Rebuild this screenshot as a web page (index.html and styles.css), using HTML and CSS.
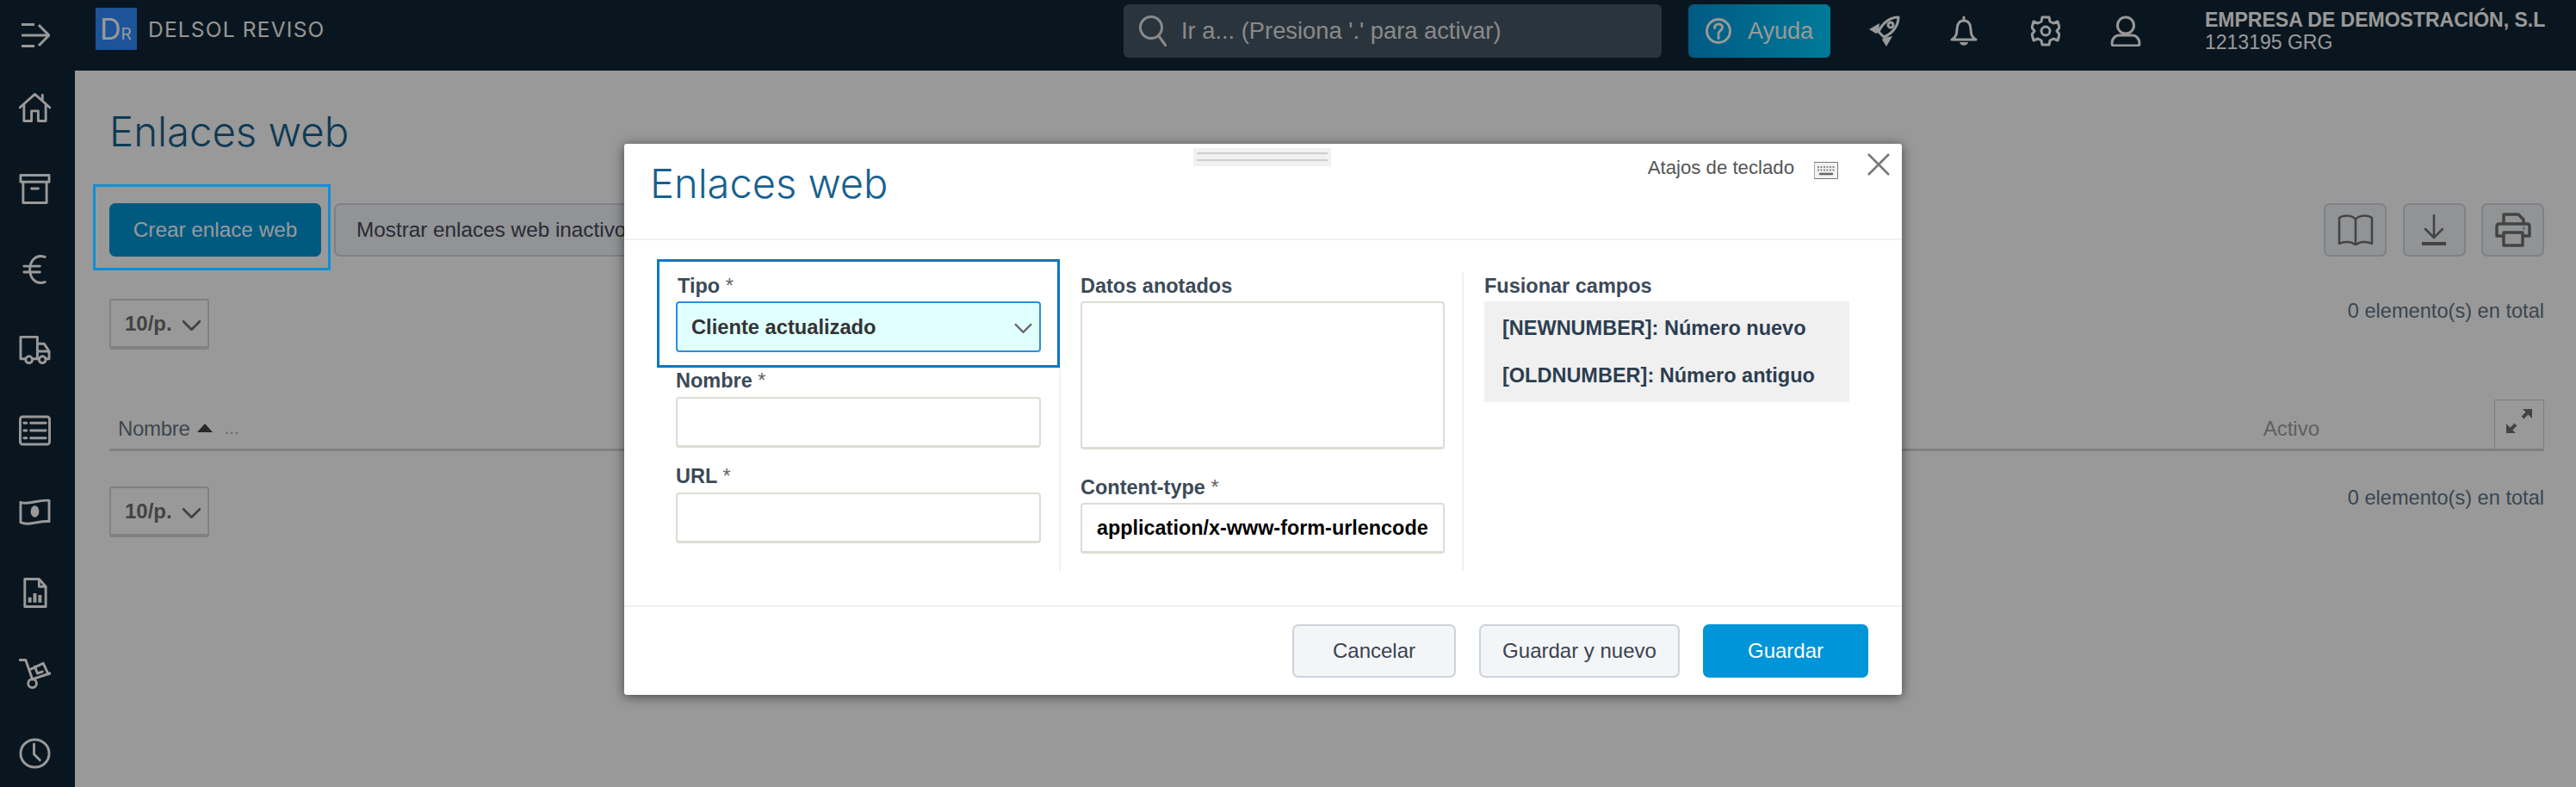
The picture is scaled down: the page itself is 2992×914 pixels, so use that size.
FILE: index.html
```html
<!DOCTYPE html>
<html lang="es">
<head>
<meta charset="utf-8">
<title>Enlaces web</title>
<link rel="stylesheet" href="styles.css">
</head>
<body>
<div class="app">
  <header class="topbar">
    <div class="toggle">
      <svg class="ic-toggle" viewBox="0 0 33 28"><path d="M0 1.500h15M0 14h31M0 26.500h15M20 2l12 12-12 12"/></svg>
    </div>
    <div class="logo"><span class="logo-d">D</span><span class="logo-r">R</span></div>
    <div class="brand">DELSOL REVISO</div>
    <div class="search">
      <svg class="ic-search" viewBox="0 0 32 36"><circle cx="14" cy="14" r="12.500"/><path d="M23 24l8 11"/></svg>
      <span>Ir a... (Presiona '.' para activar)</span>
    </div>
    <div class="help">
      <svg class="ic-help" viewBox="0 0 30 30"><circle cx="15" cy="15" r="13.500"/><path d="M10.500 11.500c0-6 9-6 9-.5 0 3.500-4.500 3.500-4.500 7.500"/><path d="M15 21v2.500"/></svg>
      <span>Ayuda</span>
    </div>
    <svg class="top-ic ic-rocket" viewBox="0 0 36 36"><path d="M34 2C24 2 15 9 11 19l6 6C27 21 34 12 34 2z"/><circle cx="25" cy="11" r="3"/><path class="solid" d="M12 9L0 16l8 5 3-2zM27 24L20 36l-5-8 2-2z"/></svg>
    <svg class="top-ic ic-bell" viewBox="0 0 32 36"><path d="M2 28c4-2 6-5 6-12 0-6 3-10 8-10s8 4 8 10c0 7 2 10 6 12zM16 6V2"/><path class="solid" d="M11 31h10c-1 5-9 5-10 0z"/></svg>
    <svg class="top-ic ic-gear" viewBox="0 0 34 36"><path d="M13 2h8l1 5 4 2 5-2 2 7-3 4 3 4-2 7-5-2-4 2-1 5h-8l-1-5-4-2-5 2-2-7 3-4-3-4 2-7 5 2 4-2z"/><circle cx="17" cy="18" r="5"/></svg>
    <svg class="top-ic ic-user" viewBox="0 0 36 36"><circle cx="18" cy="11.500" r="9.500"/><path d="M2 32c0-5 4-9 8-9h16c4 0 8 4 8 9 0 2-1 3-2 3H4c-1 0-2-1-2-3z"/></svg>
    <div class="company">
      <strong>EMPRESA DE DEMOSTRACIÓN, S.L</strong>
      <span>1213195 GRG</span>
    </div>
  </header>
  <div class="below">
    <nav class="sidebar">
      <svg class="nav-ic" viewBox="0 0 38 36"><path d="M1 18L19 2l18 16M6 14v20h9V22h8v12h9V14M28 9V3"/></svg>
      <svg class="nav-ic" viewBox="0 0 38 36"><path d="M2 2h34v8H2zM5 10v25h28V10zM15 18h8"/></svg>
      <svg class="nav-ic" viewBox="0 0 38 36"><path d="M31 3C19 -1 13 9 13 18s6 19 18 15M6 14h19M6 21h19"/></svg>
      <svg class="nav-ic" viewBox="0 0 38 36"><path d="M8 29H2V3h20v26h-6M22 11h8l6 9v9h-4M24 29h-2M22 20h14"/><circle cx="12" cy="30" r="4"/><circle cx="28" cy="30" r="4"/></svg>
      <svg class="nav-ic" viewBox="0 0 38 36"><rect x="1.500" y="1.500" width="35" height="33" rx="3"/><path d="M14 9h18M14 18h18M14 27h18M6 9h3M6 18h3M6 27h3"/></svg>
      <svg class="nav-ic" viewBox="0 0 38 36"><path d="M2 7c10 4 22-4 34-2v25C26 28 12 36 2 31z"/><ellipse class="solid" cx="19" cy="18" rx="5" ry="7"/></svg>
      <svg class="nav-ic" viewBox="0 0 38 36"><path d="M7 2h17l8 9v24H7zM24 2v9h8"/><path class="thick" d="M13 30v-6M19 30V19M25 30v-9"/></svg>
      <svg class="nav-ic" viewBox="0 0 38 36"><path d="M1 2h7l8 23 21-7M12 14l17-8 6 13"/><path d="M19 10l3 8 6-2"/><circle cx="16" cy="30" r="5"/></svg>
      <svg class="nav-ic" viewBox="0 0 38 36"><ellipse cx="19" cy="18" rx="17" ry="16.500"/><path d="M18 7v12l7 7"/></svg>
    </nav>
    <main class="main">
      <h1 class="page-title">Enlaces web</h1>
      <div class="toolbar">
        <button class="btn btn-primary btn-create">Crear enlace web</button>
        <button class="btn btn-ghost btn-inactive">Mostrar enlaces web inactivos</button>
        <div class="tool-group">
          <button class="btn-icon"><svg viewBox="0 0 44 36"><path d="M22 6C19 1 8 0 3 4v30c6-3 15-3 19 2 4-5 13-5 19-2V4c-5-4-16-3-19 2zM22 6v30"/></svg></button>
          <button class="btn-icon"><svg viewBox="0 0 44 36"><path d="M22 1v25M12 17l10 10 10-10"/><path class="thick" d="M8 34h28"/></svg></button>
          <button class="btn-icon btn-print"><svg viewBox="0 0 44 40"><path d="M11 13V2h17l6 6v5M11 27H3V16c0-2 1-3 3-3h32c2 0 3 1 3 3v11h-8M11 23h22v15H11z"/><path class="thick" d="M34 18h1"/></svg></button>
        </div>
      </div>
      <div class="pager-row">
        <div class="page-size"><span>10/p.</span><svg class="chev" viewBox="0 0 22 12"><path d="M1 1l10 10L21 1"/></svg></div>
        <div class="total">0 elemento(s) en total</div>
      </div>
      <div class="table-head">
        <span class="th-name">Nombre</span>
        <span class="sort"></span>
        <span class="dots">...</span>
        <span class="th-active">Activo</span>
        <div class="expand"><svg viewBox="0 0 30 28"><path d="M19 10l6-6M11 18l-6 6"/><path class="solid" d="M19 0h11v11zM0 17v11h11z"/></svg></div>
      </div>
      <div class="pager-row pager-bottom">
        <div class="page-size"><span>10/p.</span><svg class="chev" viewBox="0 0 22 12"><path d="M1 1l10 10L21 1"/></svg></div>
        <div class="total">0 elemento(s) en total</div>
      </div>
    </main>
  </div>

  <div class="backdrop"></div>
  <div class="hl hl-create"></div>

  <section class="modal">
    <div class="drag"><i></i><i></i></div>
    <div class="modal-head">
      <h2 class="modal-title">Enlaces web</h2>
      <div class="shortcuts">Atajos de teclado</div>
      <svg class="ic-kbd" viewBox="0 0 28 20"><rect x="0.500" y="0.500" width="27" height="19" fill="#f2f2f2" stroke="#777"/><path d="M4 6h20M4 9.500h20" stroke="#888" stroke-width="2" stroke-dasharray="2 1.500" stroke-linecap="butt"/><path d="M7 14h14" stroke="#666" stroke-width="2.500"/></svg>
      <svg class="ic-close" viewBox="0 0 26 26"><path d="M1 1l24 24M25 1L1 25"/></svg>
    </div>
    <div class="modal-body">
      <div class="col col-1">
        <label class="lbl lbl-first">Tipo <em>*</em></label>
        <div class="select-box"><span>Cliente actualizado</span><svg class="chev" viewBox="0 0 22 12"><path d="M1 1l10 10L21 1"/></svg></div>
        <label class="lbl lbl-next">Nombre <em>*</em></label>
        <input class="inp" type="text">
        <label class="lbl lbl-next">URL <em>*</em></label>
        <input class="inp" type="text">
      </div>
      <div class="col col-2">
        <label class="lbl lbl-first">Datos anotados</label>
        <textarea class="inp area"></textarea>
        <label class="lbl lbl-content">Content-type <em>*</em></label>
        <input class="inp inp-bold" type="text" value="application/x-www-form-urlencoded">
      </div>
      <div class="col col-3">
        <label class="lbl lbl-first">Fusionar campos</label>
        <ul class="merge">
          <li>[NEWNUMBER]: Número nuevo</li>
          <li>[OLDNUMBER]: Número antiguo</li>
        </ul>
      </div>
    </div>
    <div class="modal-foot">
      <button class="btn btn-foot btn-cancel">Cancelar</button>
      <button class="btn btn-foot btn-savenew">Guardar y nuevo</button>
      <button class="btn btn-foot btn-save">Guardar</button>
    </div>
  </section>
  <div class="hl hl-tipo"></div>
</div>
</body>
</html>
```
FILE: styles.css
```css
* { box-sizing: border-box; }
html, body { margin: 0; padding: 0; }
body { font-family: "Liberation Sans", Arial, sans-serif; font-size: 24px; color: #69757f; background: #fff; }
svg { display: block; fill: none; stroke: currentColor; stroke-width: 3; stroke-linejoin: round; stroke-linecap: round; }
svg .solid { fill: currentColor; stroke: none; }
svg .thick { stroke-width: 4; stroke-linecap: butt; }
button { font-family: inherit; cursor: pointer; }

.app { position: relative; width: 2992px; height: 914px; overflow: hidden; display: flex; flex-direction: column; }

/* top bar */
.topbar { height: 82px; flex: none; background: #112635; color: #fff; display: flex; align-items: center; }
.toggle { width: 111px; flex: none; padding-left: 25px; }
.ic-toggle { width: 33px; height: 28px; stroke-width: 3; stroke-linecap: butt; }
.logo { width: 48px; height: 49px; margin-top: -15px; background: #2f8aff; color: #fff; display: flex; align-items: flex-end; padding: 0 0 11px 5px; font-family: Inter, sans-serif; font-weight: 400; }
.logo-d { font-size: 34px; line-height: 26px; }
.logo-r { font-size: 19px; line-height: 14px; margin-left: 0; }
.brand { margin: -15px 0 0 13px; width: 1133px; font-family: Inter, sans-serif; font-size: 24.500px; letter-spacing: 1.200px; color: #f8f8f8; }
.search { width: 625px; height: 62px; margin-top: -10px; background: #465764; border-radius: 6px; display: flex; align-items: center; padding-left: 18px; color: #e5e5e5; font-size: 27.300px; }
.ic-search { width: 32px; height: 36px; margin-right: 17px; }
.help { width: 165px; height: 62px; margin: -10px 0 0 31px; border-radius: 6px; background: linear-gradient(90deg, #0096dc, #00cbfa); display: flex; align-items: center; padding-left: 20px; font-size: 27px; color: #fff; }
.ic-help { width: 30px; height: 30px; margin-right: 19px; }
.top-ic { height: 36px; margin-top: -11px; color: #fff; }
.ic-rocket { width: 36px; margin-left: 45px; }
.ic-bell { width: 32px; margin-left: 58px; }
.ic-gear { width: 34px; margin-left: 62px; }
.ic-user { width: 36px; margin-left: 58px; }
.company { margin: -11px 0 0 74px; color: #fff; font-size: 23px; line-height: 26px; display: flex; flex-direction: column; }
.company strong { font-size: 23px; white-space: nowrap; }

/* below */
.below { flex: 1; display: flex; min-height: 0; }
.sidebar { width: 87px; flex: none; background: #112635; color: #fff; display: flex; flex-direction: column; align-items: center; gap: 57.800px; padding: 25px 6px 0 0; }
.nav-ic { width: 37px; height: 36px; flex: none; }
.main { flex: 1; padding: 0 37px 0 40px; background: #fff; min-width: 0; }

.page-title { margin: 43px 0 55px; height: 56px; font-family: Inter, sans-serif; font-weight: 300; font-size: 47.300px; line-height: 56px; color: #17618e; }

.toolbar { height: 62px; display: flex; gap: 15px; }
.btn { height: 62px; border-radius: 7px; border: 2px solid transparent; font-size: 24px; padding: 0; white-space: nowrap; }
.btn-primary { background: #0096d5; color: #fff; }
.btn-create { width: 246px; font-size: 24.300px; }
.btn-ghost { background: #f2f5f8; border-color: #d4d9de; color: #46465a; }
.btn-inactive { width: 400px; text-align: left; padding-left: 24px; font-size: 24.300px; }
.tool-group { margin-left: auto; display: flex; gap: 18.500px; }
.btn-icon { width: 73px; height: 62px; border: 2px solid #d4d9de; border-radius: 7px; background: #f2f5f8; color: #707070; padding: 0; display: flex; align-items: center; justify-content: center; }
.btn-icon svg { width: 44px; height: 36px; stroke-width: 2.500; }
.btn-print svg { height: 40px; stroke-width: 3.500; }

.pager-row { margin-top: 49px; height: 59px; display: flex; justify-content: space-between; align-items: flex-start; }
.pager-bottom { margin-top: 41px; }
.pager-bottom .total { margin-top: -1px; }
.page-size { width: 116px; height: 59px; border: 2px solid #d8d8d8; border-bottom-width: 4px; border-radius: 3px; display: flex; align-items: center; justify-content: space-between; padding: 0 8px 0 16px; font-weight: 700; color: #707070; }
.page-size .chev { width: 21px; height: 12px; margin-top: 4px; stroke-width: 3; }
.total { font-size: 23.600px; line-height: 28px; color: #617585; }

.table-head { margin-top: 58px; height: 60px; border-bottom: 3px solid #d5d5d5; display: flex; align-items: center; padding-left: 10px; font-size: 24px; }
.th-name { color: #69757f; margin-top: 10px; letter-spacing: -0.300px; }
.sort { width: 0; height: 0; margin: 8px 0 0 8px; border: 9px solid transparent; border-top: 0; border-bottom: 10px solid #444; }
.dots { margin: 10px 0 0 15px; font-size: 20px; color: #aaa; font-style: italic; }
.th-active { margin: 10px 203px 0 auto; color: #a0a0a0; }
.expand { width: 58px; height: 57px; border: 1px solid #cfcfcf; border-bottom: 0; color: #707070; padding: 10px 0 0 13px; }
.expand svg { width: 30px; height: 28px; stroke-width: 4; stroke-linecap: butt; }

/* overlay */
.backdrop { position: absolute; inset: 0; background: rgba(0, 0, 0, 0.4); }
.hl { position: absolute; border: 3px solid #0d8fd8; }
.hl-create { left: 108px; top: 214px; width: 276px; height: 100px; }
.hl-tipo { left: 763px; top: 301px; width: 468px; height: 126px; border-color: #0a78c4; }

/* modal */
.modal { position: absolute; left: 725px; top: 167px; width: 1484px; height: 640px; background: #fff; border-radius: 3px; box-shadow: 0 2px 14px rgba(0, 0, 0, 0.55); display: flex; flex-direction: column; }
.drag { position: absolute; left: 661px; top: 5px; width: 160px; height: 21px; background: #f1f1f1; display: flex; flex-direction: column; gap: 6px; padding: 5px 4px 0; }
.drag i { display: block; height: 2px; background: #cfcfcf; }
.modal-head { height: 112px; flex: none; border-bottom: 2px solid #eef1f4; display: flex; align-items: flex-start; }
.modal-title { margin: 18px 0 0 30px; font-family: Inter, sans-serif; font-weight: 300; font-size: 47px; line-height: 56px; color: #17618e; }
.shortcuts { margin: 14px 0 0 auto; font-size: 22.200px; line-height: 28px; color: #555; }
.ic-kbd { width: 28px; height: 20px; margin: 21px 0 0 23px; stroke-width: 1; }
.ic-close { width: 26px; height: 26px; margin: 11px 14px 0 34px; color: #777; stroke-width: 2.500; stroke-linecap: butt; }

.modal-body { flex: 1; display: flex; padding: 37px 0 40px 60px; min-height: 0; }
.col { display: flex; flex-direction: column; }
.col-1 { width: 447px; padding-right: 21px; border-right: 2px solid #f0f0f0; }
.col-2 { width: 468px; padding: 0 20px 0 23px; border-right: 2px solid #f0f0f0; }
.col-3 { width: 450px; padding-left: 24px; }
.lbl { display: block; height: 34px; font-size: 23.500px; line-height: 30px; font-weight: 700; color: #3c4a58; white-space: nowrap; }
.lbl-first { line-height: 33px; }
.col-1 .lbl-first { padding-left: 2px; }
.lbl em { font-style: normal; font-weight: 400; color: #666; }
.lbl-next { margin-top: 18px; }
.lbl-content { margin-top: 28px; line-height: 32px; }
.inp { display: block; width: 100%; height: 59px; padding: 0 17px; border: 2px solid #ddddd5; border-bottom-width: 3px; border-radius: 4px; background: #fff; font-family: inherit; font-size: 22px; outline: none; resize: none; color: #000; }
.inp-bold { font-weight: 700; font-size: 23.400px; padding-right: 18px; }
.area { height: 172px; }
.select-box { height: 59px; border: 2px solid #2e90d8; border-radius: 4px; background: #e0ffff; display: flex; align-items: center; justify-content: space-between; padding: 2px 8px 0 16px; font-weight: 700; font-size: 23.700px; color: #333; }
.select-box .chev { width: 21px; height: 12px; color: #666; stroke-width: 2.500; stroke-linecap: butt; stroke-linejoin: miter; }
.merge { list-style: none; margin: 0; padding: 4px 0 6px 21px; width: 424px; height: 117px; background: #f0f0f0; font-weight: 700; font-size: 23.500px; color: #2c3e50; }
.merge li { height: 55px; line-height: 55px; white-space: nowrap; }

.modal-foot { height: 104px; flex: none; border-top: 2px solid #eef1f4; display: flex; justify-content: flex-end; gap: 27px; padding: 20px 39px 0 0; }
.btn-foot { height: 62px; font-size: 24px; }
.btn-cancel { width: 190px; background: #f4f5f7; border-color: #cdd3dc; color: #3a4250; }
.btn-savenew { width: 233px; background: #f4f5f7; border-color: #cdd3dc; color: #3a4250; }
.btn-save { width: 192px; background: #0095d8; color: #fff; }
```
